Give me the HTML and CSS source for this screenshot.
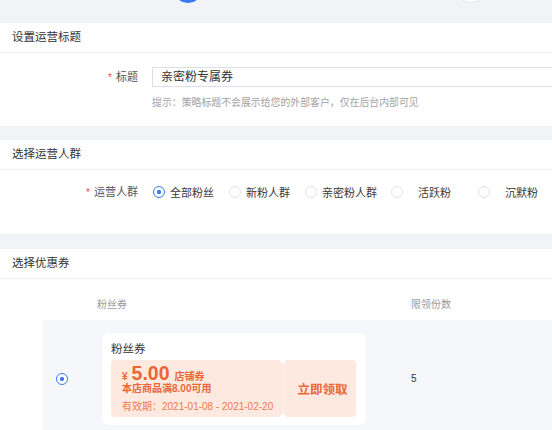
FILE: index.html
```html
<!DOCTYPE html>
<html lang="zh-CN">
<head>
<meta charset="utf-8">
<title>运营策略</title>
<link rel="stylesheet" href="styles.css">
</head>
<body>
<div class="steps">
  <span class="step active"></span>
  <span class="step"></span>
</div>

<section class="panel panel-title-sec">
  <div class="panel-title">设置运营标题</div>
  <div class="panel-body body-title">
    <div class="form-row">
      <label class="form-label"><i class="req">*</i>标题</label>
      <div class="form-control">
        <div class="input">亲密粉专属券</div>
        <div class="hint">提示：策略标题不会展示给您的外部客户，仅在后台内部可见</div>
      </div>
    </div>
  </div>
</section>

<section class="panel panel-crowd">
  <div class="panel-title">选择运营人群</div>
  <div class="panel-body body-crowd">
    <div class="form-row">
      <label class="form-label"><i class="req">*</i>运营人群</label>
      <div class="radio-group">
        <span class="opt"><i class="radio checked"></i>全部粉丝</span>
        <span class="opt"><i class="radio"></i>新粉人群</span>
        <span class="opt"><i class="radio"></i>亲密粉人群</span>
        <span class="opt wide m14"><i class="radio"></i>活跃粉</span>
        <span class="opt wide m27"><i class="radio"></i>沉默粉</span>
      </div>
    </div>
  </div>
</section>

<section class="panel panel-coupon">
  <div class="panel-title">选择优惠券</div>
  <div class="table">
    <div class="thead">
      <div class="th"></div>
      <div class="th">粉丝券</div>
      <div class="th">限领份数</div>
    </div>
    <div class="trow">
      <div class="td td-radio"><i class="radio checked"></i></div>
      <div class="td">
        <div class="card">
          <div class="card-title">粉丝券</div>
          <div class="coupon">
            <div class="coupon-main">
              <div class="price"><span class="yen">¥</span><span class="amount">5.00</span><span class="kind">店铺券</span></div>
              <div class="cond">本店商品满8.00可用</div>
              <div class="valid">有效期：2021-01-08 - 2021-02-20</div>
            </div>
            <div class="coupon-action">立即领取</div>
          </div>
        </div>
      </div>
      <div class="td td-num">5</div>
    </div>
  </div>
</section>
</body>
</html>
```

FILE: styles.css
```css
* { box-sizing: border-box; }
html, body { margin: 0; padding: 0; }
body {
  background: #f1f3f7;
  font-family: "Liberation Sans", "Noto Sans CJK SC", sans-serif;
  color: #333;
  width: 552px;
  height: 430px;
  overflow: hidden;
}
i { font-style: normal; }

.steps {
  height: 23px;
  display: flex;
  padding-left: 172px;
  overflow: hidden;
}
.step {
  flex: none;
  width: 32px;
  height: 32px;
  border-radius: 50%;
  margin-top: -29px;
  background: #fff;
  border: 1px solid #e3e6ec;
}
.step.active { background: #3b78ef; border-color: #3b78ef; }
.step + .step { margin-left: 251px; }

.panel {
  background: #fff;
  overflow: hidden;
}
.panel-title-sec { margin-bottom: 14px; }
.panel-crowd { margin-bottom: 15px; }
.panel-coupon { height: 200px; }

.panel-title {
  height: 30px;
  line-height: 29px;
  padding-left: 12px;
  font-size: 11.5px;
  color: #333;
  border-bottom: 1px solid #eef0f3;
}

.body-title { padding: 14px 0 17px; }
.body-crowd { padding: 12px 0 31px; }

.form-row { display: flex; align-items: flex-start; }
.form-label {
  flex: none;
  width: 138px;
  text-align: right;
  line-height: 20px;
  font-size: 11px;
  color: #555;
}
.req { color: #f04b3c; margin-right: 4px; font-size: 10px; }
.form-control { margin-left: 14px; flex: 1; }
.input {
  height: 20px;
  line-height: 18px;
  border: 1px solid #dcdfe5;
  margin-right: -20px;
  padding-left: 8px;
  font-size: 12px;
  color: #333;
}
.hint {
  margin-top: 10px;
  height: 12px;
  line-height: 12px;
  font-size: 9.9px;
  color: #a3a3a3;
  white-space: nowrap;
}

.radio-group {
  margin-left: 15px;
  display: flex;
  align-items: center;
  height: 20px;
}
.opt {
  display: flex;
  align-items: center;
  gap: 5px;
  font-size: 11px;
  color: #3a3a3a;
}
.opt + .opt { margin-left: 15px; }
.opt.wide { gap: 15px; }
.opt.m14 { margin-left: 14px; }
.opt.m27 { margin-left: 27px; }

.radio {
  flex: none;
  display: block;
  width: 12px;
  height: 12px;
  border-radius: 50%;
  border: 1px solid #dfe2e7;
  background: #fff;
}
.radio.checked {
  border-color: #3b78ef;
  background: radial-gradient(circle, #3b78ef 0, #3b78ef 1.8px, #fff 2.4px);
}

.table { margin-left: 43px; }
.thead, .trow {
  display: grid;
  grid-template-columns: 54px 314px 1fr;
}
.th {
  padding: 20px 0 9px;
  line-height: 12px;
  font-size: 10px;
  color: #9a9a9a;
}
.trow {
  background: #f5f7fa;
  padding: 13px 0;
}
.td-radio { align-self: center; padding-left: 13px; }
.td-num { align-self: center; font-size: 10px; color: #333; line-height: 12px; }

.card {
  margin-left: 5px;
  width: 264px;
  background: #fff;
  border-radius: 6px;
  padding: 9px 10px 8px 9px;
  box-shadow: 0 0 3px rgba(0, 0, 0, 0.03);
}
.card-title {
  line-height: 14px;
  font-size: 11.5px;
  color: #333;
}
.coupon {
  margin-top: 4px;
  height: 57px;
  display: flex;
  background: #fde9e0;
  border-radius: 4px;
  color: #ea6636;
}
.coupon-main {
  width: 172px;
  padding: 4px 0 0 11px;
}
.price {
  height: 18px;
  line-height: 18px;
  font-weight: bold;
  white-space: nowrap;
}
.yen { font-size: 10px; margin-right: 4px; }
.amount { font-size: 19.5px; }
.kind { font-size: 10px; margin-left: 5px; }
.cond {
  line-height: 14px;
  font-size: 10px;
  font-weight: bold;
  white-space: nowrap;
}
.valid {
  margin-top: 4px;
  line-height: 14px;
  font-size: 10px;
  color: #ef7a4f;
  white-space: nowrap;
}
.coupon-action {
  position: relative;
  flex: 1;
  display: flex;
  align-items: center;
  justify-content: center;
  padding-left: 5px;
  font-size: 12.5px;
  font-weight: bold;
  border-left: 1px solid #fef3ee;
}
.coupon-action::before,
.coupon-action::after {
  content: "";
  position: absolute;
  left: -4px;
  width: 6px;
  height: 6px;
  border-radius: 50%;
  background: #fff;
}
.coupon-action::before { top: -3px; }
.coupon-action::after { bottom: -3px; }
```
